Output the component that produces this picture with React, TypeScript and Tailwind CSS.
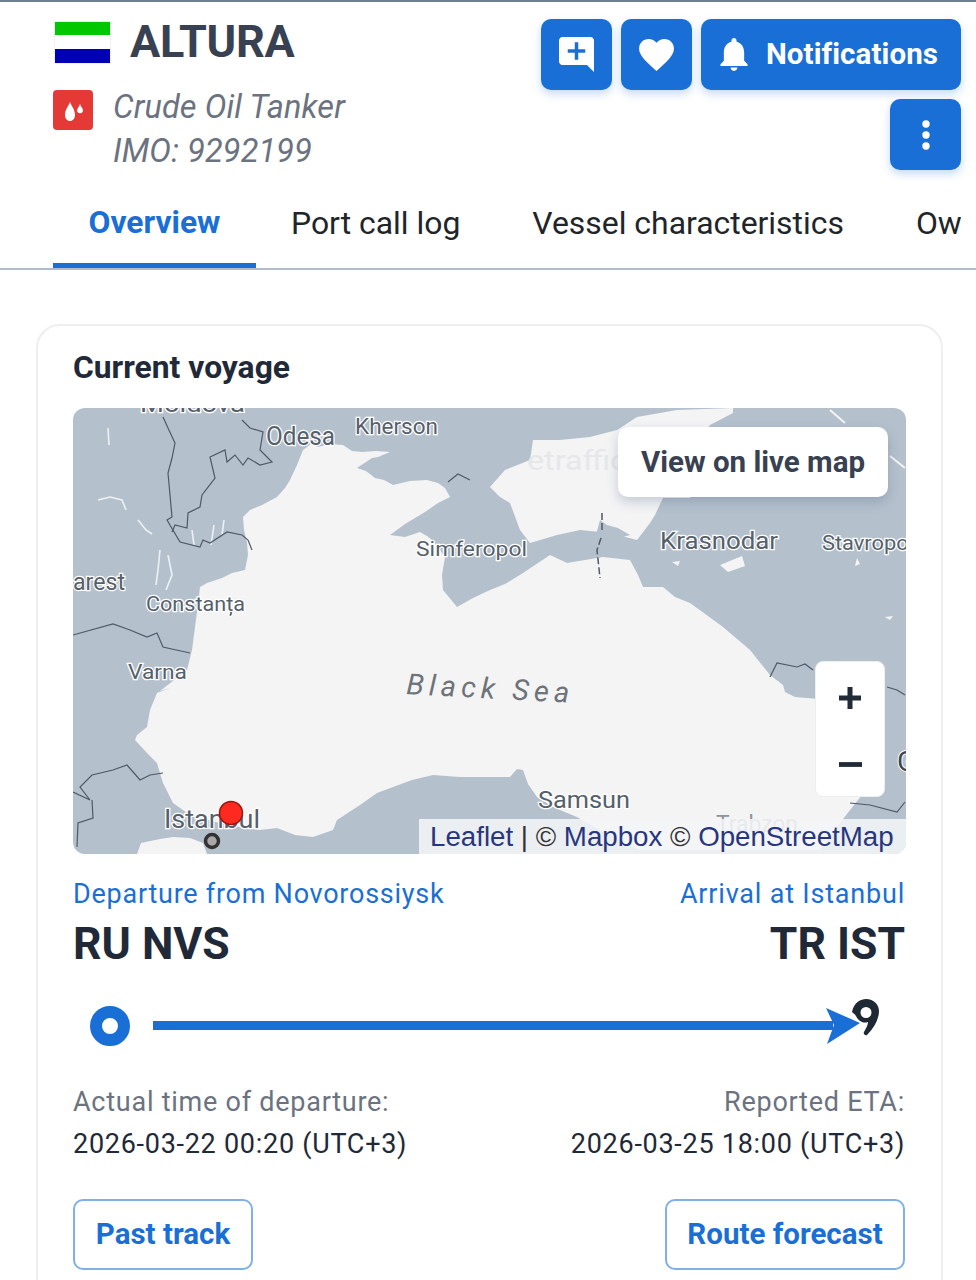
import React from "react";

const land = "#b4c1cd";
const sea = "#f4f4f5";

const seaPath =
  "M303 450 L311 444 L318 447 L330 444 L343 445 L352 451 L362 452 L376 451 L390 452 L378 457 L372 458 L357 468 L366 471 L375 478 L384 480 L393 485 L410 481 L427 480 L438 483 L445 488 L450 497 L438 503 L425 512 L405 524 L390 535 L405 537 L420 532 L427 536 L432 540 L445 557 L442 575 L443 590 L457 607 L473 598 L490 590 L505 584 L523 573 L550 555 L567 563 L585 560 L603 557 L630 560 L638 575 L643 587 L663 587 L675 597 L690 603 L708 616 L723 627 L750 650 L770 675 L783 685 L785 692 L795 697 L807 698 L830 700 L860 725 L880 760 L870 785 L850 810 L837 827 L820 850 L640 850 L600 830 L577 817 L555 808 L537 797 L528 784 L523 770 L517 769 L510 777 L490 777 L460 777 L433 775 L412 780 L393 787 L377 793 L360 805 L337 820 L333 830 L313 837 L295 835 L277 828 L260 830 L227 825 L190 815 L173 803 L168 793 L163 783 L157 763 L147 753 L135 740 L137 735 L147 727 L150 710 L157 693 L170 688 L160 691 L187 670 L192 650 L195 627 L198 605 L200 587 L207 583 L222 578 L232 573 L245 570 L248 555 L247 543 L244 530 L243 517 L250 510 L262 505 L277 497 L285 488 L290 480 L297 465 Z";

const azovPath =
  "M510 503 L500 497 L490 487 L505 470 L530 460 L533 440 L560 440 L590 437 L617 430 L637 417 L677 410 L733 408 L733 413 L710 425 L700 440 L690 498 L663 498 L655 515 L650 523 L637 540 L610 533 L580 530 L557 535 L530 543 L520 530 Z";

const marmaraPath = "M137 854 L141 843 L160 839 L173 837 L190 838 L203 843 L207 854 Z";

const borders = [
  "M163 417 L168 428 L175 443 L172 458 L168 473 L170 495 L172 517 L167 520 L180 542 L200 547 L203 540 L210 543 L227 532 L242 535 L248 540 L252 550",
  "M242 420 L250 428 L263 432 L260 450 L272 462 L260 465 L248 458 L243 465 L235 455 L227 462 L225 450 L210 457 L215 478 L202 495 L200 507 L188 513 L187 528 L175 525 L172 532",
  "M73 635 L113 624 L130 630 L147 637 L157 633 L163 647 L190 653",
  "M73 792 L90 800 L80 787 L92 775 L113 770 L127 765 L140 780 L150 775 L163 773",
  "M92 800 L93 818 L78 823 L77 847",
  "M770 677 L777 663 L797 667 L805 664 L813 670",
  "M887 687 L897 690 L905 695",
  "M850 803 L870 805 L897 812 L905 802",
];

const rivers = [
  "M98 500 L110 497 L122 500 L126 510",
  "M138 520 L146 530 L152 534",
  "M160 550 L158 570 L156 585",
  "M168 555 L172 575 L166 590",
  "M192 530 L194 545 M211 545 L214 525 M222 535 L224 520",
  "M108 428 L109 445",
];

const labelClass = "font-['Roboto'] fill-[#55606b] stroke-white stroke-[2.5px] [paint-order:stroke]";

const labels: [string, number, number, number, number][] = [
  ["Moldova", 140, 412, 23, 105],
  ["Odesa", 266, 445, 25, 69],
  ["Kherson", 355, 434, 22, 83],
  ["Simferopol", 416, 556, 21, 111],
  ["Krasnodar", 660, 549, 24, 118],
  ["Stavropol", 822, 550, 21, 92],
  ["arest", 73, 590, 24, 52],
  ["Constanța", 146, 611, 20, 99],
  ["Varna", 128, 679, 20, 59],
  ["Samsun", 538, 808, 23, 92],
  ["Istanbul", 164, 828, 26, 96],
];

function MapArt() {
  return (
    <svg viewBox="73 408 833 446" className="block w-[833px] h-[446px]">
      <rect x="73" y="408" width="833" height="446" fill={land} />
      <path d={seaPath} fill={sea} />
      <path d={azovPath} fill={sea} />
      <path d={marmaraPath} fill={sea} />
      <path d="M607 525 L600 520 L596 535 L612 540 L630 535 L618 528 Z" fill={land} />
      <path d="M720 565 L742 556 L745 566 L728 572 Z M672 562 L680 561 L678 566 Z M857 558 L860 564 L855 566 Z M885 617 L893 616 L890 620 Z" fill={sea} />
      <path d="M830 410 L845 423 M890 456 L905 468" stroke={sea} strokeWidth="2" fill="none" />
      {rivers.map((d) => (
        <path key={d} d={d} stroke="#eef1f3" strokeWidth="1.6" fill="none" />
      ))}
      {borders.map((d) => (
        <path key={d} d={d} stroke="#4d5966" strokeWidth="1.2" fill="none" />
      ))}
      <path d="M602 513 L602 533 M601 538 L597 550 L600 578" stroke="#4d5966" strokeWidth="1.5" strokeDasharray="7 3" fill="none" />
      <path d="M448 482 L458 474 L470 480" stroke="#4d5966" strokeWidth="1.2" fill="none" />
      <text x="527" y="470" fontSize="27" textLength="100" lengthAdjust="spacingAndGlyphs" className="font-['Roboto'] fill-[#e6e7e9]">etraffic</text>
      {labels.map(([t, x, y, s, w]) => (
        <text key={t} x={x} y={y} fontSize={s} textLength={w} lengthAdjust="spacingAndGlyphs" className={labelClass}>
          {t}
        </text>
      ))}
      <text x="406" y="694" fontSize="29" textLength="163" transform="rotate(3 406 694)" className="font-['Roboto'] italic fill-[#6d7378]">
        Black Sea
      </text>
      <text x="716" y="832" fontSize="23" textLength="82" lengthAdjust="spacingAndGlyphs" className="font-['Roboto'] fill-[#8b949c]">Trabzon</text>
      <text x="897" y="771" fontSize="28" className="font-['Roboto'] fill-[#3d4650] stroke-white stroke-[2px] [paint-order:stroke]">G</text>
      <circle cx="231" cy="813" r="11.5" fill="#ff2a1f" stroke="#9c1512" strokeWidth="1.5" />
      <circle cx="212" cy="841" r="6.5" fill="#a9a9a9" stroke="#333" strokeWidth="3.5" />
    </svg>
  );
}

function TopButton({ children, wide }: { children: React.ReactNode; wide?: boolean }) {
  return (
    <div className={`h-[71px] ${wide ? "w-[260px] gap-[18px]" : "w-[71px]"} flex items-center justify-center rounded-[10px] bg-[#1a6fd6] text-white shadow-[0_4px_8px_rgba(26,111,214,0.25)]`}>
      {children}
    </div>
  );
}

export default function App() {
  return (
    <div className="relative w-[976px] h-[1280px] overflow-hidden bg-white font-['Roboto',sans-serif]">
      <div className="h-[2px] bg-[#6f7f8f]" />
      <header className="flex justify-between pl-[53px] pr-[15px] pt-[17px] h-[174px]">
        <div>
          <div className="flex items-center h-[44px] pt-[2px]">
            <div className="flex flex-col ml-[2px] w-[55px] h-[41px] outline outline-1 outline-[#eef0f2]">
              <div className="flex-1 bg-[#00c800]" />
              <div className="flex-1 bg-white" />
              <div className="flex-1 bg-[#0000b4]" />
            </div>
            <span className="ml-[20px] text-[45px] leading-[44px] font-bold text-[#374151] tracking-[-0.3px]">ALTURA</span>
          </div>
          <div className="flex mt-[21px] gap-[20px]">
            <div className="mt-[6px] w-[40px] h-[40px] rounded-[4px] bg-[#e53935] flex items-center justify-center">
              <svg viewBox="0 0 40 40" className="w-[40px] h-[40px]" fill="#fff">
                <path d="M17 12 C15.5 16 12 19.5 12 25 C12 28.5 14.2 31 17 31 C19.8 31 22 28.5 22 25 C22 19.5 18.5 16 17 12 Z" />
                <path d="M27 14 C26 17 24 18.5 24 20.5 C24 22 25.3 23.2 27 23.2 C28.7 23.2 30 22 30 20.5 C30 18.5 28 17 27 14 Z" />
              </svg>
            </div>
            <div className="pt-[1px] text-[32.5px] leading-[44px] italic text-[#6b7280] tracking-[0.12px]">
              <div>Crude Oil Tanker</div>
              <div>IMO: 9292199</div>
            </div>
          </div>
        </div>
        <div className="w-[420px] flex flex-wrap justify-end content-start gap-[9px]">
          <TopButton>
            <svg viewBox="2 2 20 20" className="w-[35px] h-[35px]" fill="currentColor">
              <path d="M22 4c0-1.1-.9-2-2-2H4c-1.1 0-2 .9-2 2v12c0 1.1.9 2 2 2h14l4 4-.01-18zM17 11h-4v4h-2v-4H7V9h4V5h2v4h4v2z" />
            </svg>
          </TopButton>
          <TopButton>
            <svg viewBox="2 3 20 18.35" className="w-[35px] h-[32px]" fill="currentColor">
              <path d="M12 21.35l-1.45-1.32C5.4 15.36 2 12.28 2 8.5 2 5.42 4.42 3 7.5 3c1.74 0 3.41.81 4.5 2.09C13.09 3.81 14.76 3 16.5 3 19.58 3 22 5.42 22 8.5c0 3.78-3.4 6.86-8.55 11.54L12 21.35z" />
            </svg>
          </TopButton>
          <TopButton wide>
            <svg viewBox="4 2.5 16 19.5" className="w-[28px] h-[33px] -ml-[4px]" fill="currentColor">
              <path d="M12 22c1.1 0 2-.9 2-2h-4c0 1.1.89 2 2 2zm6-6v-5c0-3.07-1.64-5.64-4.5-6.32V4c0-.83-.67-1.5-1.5-1.5s-1.5.67-1.5 1.5v.68C7.63 5.36 6 7.92 6 11v5l-2 2v1h16v-1l-2-2z" />
            </svg>
            <span className="text-[29.5px] font-bold tracking-[0.1px]">Notifications</span>
          </TopButton>
          <TopButton>
            <svg viewBox="0 0 10 30" className="w-[10px] h-[30px]" fill="currentColor">
              <circle cx="5" cy="4" r="3.7" />
              <circle cx="5" cy="15" r="3.7" />
              <circle cx="5" cy="26" r="3.7" />
            </svg>
          </TopButton>
        </div>
      </header>

      <nav className="border-b-2 border-[#b3bcc6] h-[94px]">
        <div className="ml-[53px] w-[908px] h-[92px] flex overflow-hidden text-[31.9px] text-[#212529] whitespace-nowrap">
          <div className="shrink-0 h-[92px] w-[203px] flex items-center justify-center font-bold text-[#1a6fd6] border-b-[5px] border-[#1a6fd6] pt-[7px] text-[31.8px]">Overview</div>
          <div className="shrink-0 h-[92px] pl-[35px] pr-[36px] pt-[4px] flex items-center">Port call log</div>
          <div className="shrink-0 h-[92px] pl-[36px] pr-[36px] pt-[4px] flex items-center">Vessel characteristics</div>
          <div className="shrink-0 h-[92px] pl-[36px] pt-[4px] flex items-center">Owner</div>
        </div>
      </nav>

      <main className="ml-[36px] mt-[54px] w-[907px] h-[1000px] rounded-[24px] border-2 border-[#eceef0] px-[35px] pt-[21px]">
        <h2 className="text-[31.8px] leading-[40px] font-bold text-[#1f2937]">Current voyage</h2>
        <div className="relative mt-[21px] w-[833px] h-[446px] rounded-[12px] overflow-hidden">
          <MapArt />
          <div className="absolute left-[545px] top-[19px] w-[270px] h-[70px] rounded-[10px] bg-white shadow-[0_5px_12px_rgba(60,80,120,0.25)] flex items-center justify-center text-[29.5px] font-bold text-[#374151]">
            View on live map
          </div>
          <div className="absolute left-[742px] top-[253px] w-[70px] h-[136px] rounded-[8px] bg-white border border-[#eceef0] flex flex-col items-center text-[#212b36]">
            <svg viewBox="0 0 24 24" className="w-[24px] h-[24px] mt-[24px]" fill="currentColor">
              <path d="M9.5 1h5v8.5H23v5h-8.5V23h-5v-8.5H1v-5h8.5z" />
            </svg>
            <svg viewBox="0 0 24 5" className="w-[23px] h-[5px] mt-[52px]" fill="currentColor">
              <rect width="24" height="5" />
            </svg>
          </div>
          <div className="absolute right-0 bottom-0 w-[487px] h-[35px] bg-[rgba(244,245,247,0.88)] flex items-center pl-[11px] font-['Liberation_Sans',sans-serif] text-[27.7px] text-[#333] whitespace-nowrap">
            <span className="text-[#28367f]">Leaflet</span>
            <span>&nbsp;|&nbsp;©&nbsp;</span>
            <span className="text-[#28367f]">Mapbox</span>
            <span>&nbsp;©&nbsp;</span>
            <span className="text-[#28367f]">OpenStreetMap</span>
          </div>
        </div>

        <div className="flex justify-between mt-[24px] pr-[1px]">
          <div>
            <div className="text-[27px] leading-[32px] tracking-[0.75px] text-[#1a6fd6]">Departure from Novorossiysk</div>
            <div className="mt-[7px] text-[44.5px] leading-[54px] font-bold text-[#1f2937]">RU NVS</div>
          </div>
          <div className="text-right">
            <div className="text-[27px] leading-[32px] tracking-[0.8px] text-[#1a6fd6]">Arrival at Istanbul</div>
            <div className="mt-[7px] text-[44.5px] leading-[54px] font-bold text-[#1f2937]">TR IST</div>
          </div>
        </div>

        <div className="relative h-[62px] mt-[23px] flex items-center pl-[17px]">
          <div className="w-[40px] h-[40px] rounded-full border-[12px] border-[#1a6fd6] bg-white mt-[2px] shrink-0" />
          <div className="ml-[23px] mt-[0px] w-[680px] h-[9px] bg-[#1a6fd6] shrink-0" />
          <svg viewBox="0 0 60 50" className="absolute left-[752px] top-[5px] w-[60px] h-[50px]" fill="none">
            <path d="M1 9 L35 24 L2 45 L9 26 Z" fill="#1a6fd6" />
            <path fillRule="evenodd" clipRule="evenodd" fill="#1f2933" d="M27 13 C29 3 36 0 41 0 C49 0 54 6 54 12 C54 19 50 28 42 36 C40 37 38 35 39 33 C41 29 43 26 43 23 C37 25 33 21 31 17 C30 15 28 14 27 13 Z M41 8 A5.5 5.5 0 1 0 41 19 A5.5 5.5 0 1 0 41 8 Z" />
          </svg>
        </div>

        <div className="flex justify-between mt-[25px] pr-[1px] text-[27px] leading-[42px]">
          <div>
            <div className="text-[#6b7280] tracking-[0.75px]">Actual time of departure:</div>
            <div className="text-[#1f2937] tracking-[0.72px]">2026-03-22 00:20 (UTC+3)</div>
          </div>
          <div className="text-right">
            <div className="text-[#6b7280] tracking-[0.75px]">Reported ETA:</div>
            <div className="text-[#1f2937] tracking-[0.72px]">2026-03-25 18:00 (UTC+3)</div>
          </div>
        </div>

        <div className="flex justify-between mt-[34px] pr-[1px]">
          <div className="w-[180px] h-[71px] rounded-[10px] border-2 border-[#7fb0e6] flex items-center justify-center text-[29.5px] font-bold text-[#1a6fd6]">Past track</div>
          <div className="w-[240px] h-[71px] rounded-[10px] border-2 border-[#7fb0e6] flex items-center justify-center text-[29.5px] font-bold text-[#1a6fd6]">Route forecast</div>
        </div>
      </main>
    </div>
  );
}
